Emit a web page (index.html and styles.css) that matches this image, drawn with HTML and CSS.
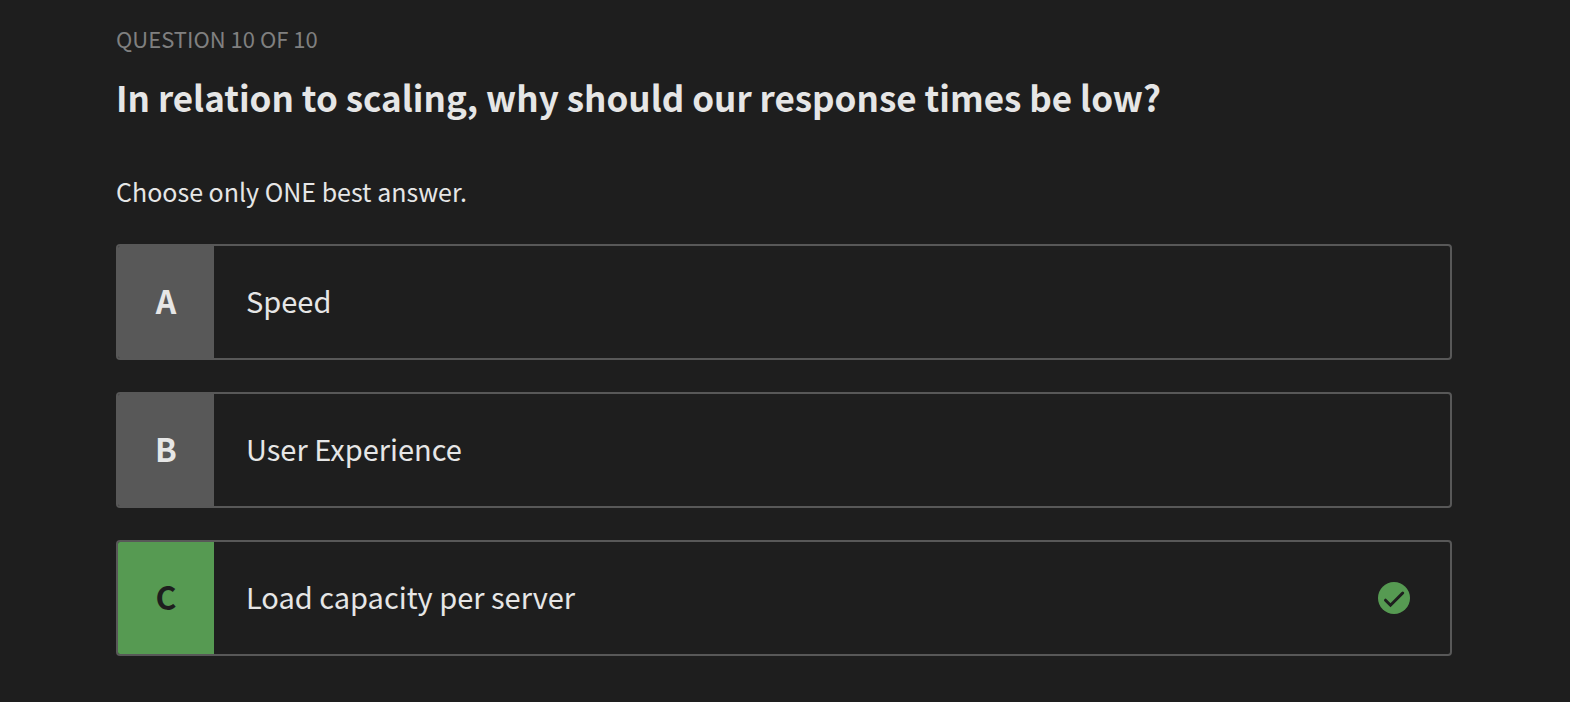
FILE: index.html
```html
<!DOCTYPE html>
<html lang="en">
<head>
<meta charset="utf-8">
<meta name="viewport" content="width=device-width, initial-scale=1">
<title>Question 10 of 10</title>
<link rel="stylesheet" href="styles.css">
</head>
<body>
<main class="quiz">
  <p class="progress">QUESTION 10 OF 10</p>
  <h1 class="question">In relation to scaling, why should our response times be low?</h1>
  <p class="hint" id="hint">Choose only ONE best answer.</p>
  <div class="answers" role="group" aria-labelledby="hint">
    <button class="answer" type="button">
      <span class="letter">A</span>
      <span class="text">Speed</span>
    </button>
    <button class="answer" type="button">
      <span class="letter">B</span>
      <span class="text">User Experience</span>
    </button>
    <button class="answer correct" type="button" aria-pressed="true">
      <span class="letter">C</span>
      <span class="text">Load capacity per server</span>
      <svg class="check" viewBox="0 0 32 32" aria-hidden="true">
        <circle cx="16" cy="16" r="16"/>
        <path d="M7.5 18.2 12.5 23.2 24.7 11"/>
      </svg>
    </button>
  </div>
</main>
</body>
</html>
```
FILE: styles.css
```css
* {
  box-sizing: border-box;
}

body {
  margin: 0;
  background: #1e1e1e;
  color: #e6e6e6;
  font-family: "Noto Sans CJK SC", "Noto Sans", sans-serif;
}

.quiz {
  padding: 22px 118px 46px 116px;
}

.progress {
  margin: 0;
  color: #808080;
  font-size: 22px;
  line-height: 32px;
}

.question {
  margin: 17px 0 48px;
  font-size: 35px;
  font-weight: 700;
  line-height: 52px;
}

.hint {
  margin: 0 0 33px;
  font-size: 25px;
  line-height: 40px;
}

.answers {
  display: grid;
  gap: 32px;
}

.answer {
  display: flex;
  align-items: stretch;
  width: 100%;
  min-height: 116px;
  padding: 0;
  overflow: hidden;
  border: 2px solid #585858;
  border-radius: 4px;
  background: transparent;
  color: inherit;
  font: inherit;
  text-align: left;
  cursor: pointer;
}

.letter {
  display: flex;
  flex: none;
  align-items: center;
  justify-content: center;
  width: 96px;
  padding-bottom: 4px;
  background: #585858;
  font-size: 32px;
  font-weight: 700;
}

.text {
  flex: 1;
  align-self: center;
  padding: 0 32px 4px;
  font-size: 29px;
  line-height: 40px;
}

.correct .letter {
  background: #569a52;
  color: #1e1e1e;
}

.check {
  flex: none;
  align-self: center;
  width: 32px;
  height: 32px;
  margin-right: 40px;
}

.check circle {
  fill: #569a52;
}

.check path {
  fill: none;
  stroke: #1e1e1e;
  stroke-width: 3;
  stroke-linecap: round;
}
```
